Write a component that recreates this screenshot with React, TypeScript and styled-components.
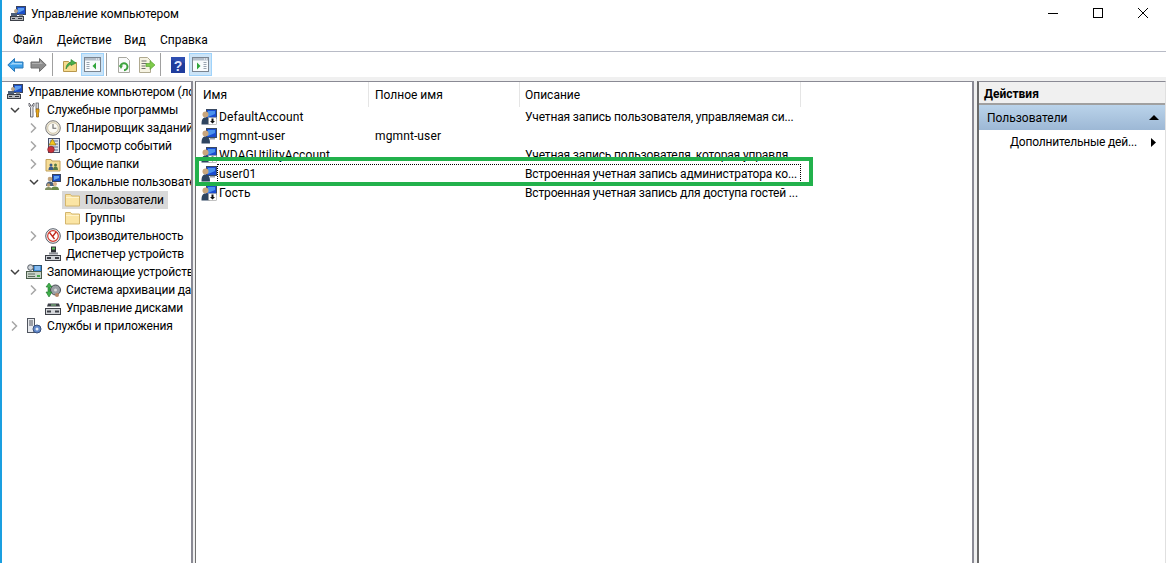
import React from "react";
import styled, { createGlobalStyle } from "styled-components";

const Global = createGlobalStyle`
  html, body { margin: 0; padding: 0; background: #fff; }
  #root { width: 1166px; height: 563px; overflow: hidden; }
`;

const Window = styled.div`
  position: relative;
  width: 1166px;
  height: 563px;
  overflow: hidden;
  display: flex;
  flex-direction: column;
  background: #fff;
  border-left: 2px solid #1a9fe0;
  box-sizing: border-box;
  font-family: "Roboto", "Noto Sans", sans-serif;
  font-size: 12px;
  color: #000;
`;

const TitleBar = styled.div`
  height: 28px;
  display: flex;
  align-items: center;
  padding-left: 8px;
  gap: 5px;
  flex: none;
`;
const TitleText = styled.span`
  font-size: 12px;
  flex: 1;
  padding-bottom: 1px;
  letter-spacing: -0.1px;
`;
const WindowControls = styled.div`
  display: flex;
  margin-right: 1px;
`;
const WindowButton = styled.div`
  width: 45px;
  height: 28px;
  display: flex;
  align-items: center;
  justify-content: center;
  margin-top: -3px;
`;
const MenuBar = styled.div`
  height: 23px;
  flex: none;
  display: flex;
  align-items: center;
  padding-left: 11px;
  padding-top: 1px;
  box-sizing: content-box;
  margin-top: -1px;
  border-bottom: 1px solid #b8bbc6;
`;
const MenuItem = styled.span<{ $w: number }>`
  width: ${(p) => p.$w}px;
  flex: none;
`;
const Toolbar = styled.div`
  height: 25px;
  flex: none;
  display: flex;
  align-items: center;
  padding-left: 2px;
`;
const ToolButton = styled.div<{ $on?: boolean }>`
  width: 23px;
  height: 23px;
  box-sizing: border-box;
  display: flex;
  align-items: center;
  justify-content: center;
  background: ${(p) => (p.$on ? "#cce4f7" : "transparent")};
  border: 1px solid ${(p) => (p.$on ? "#9fd3fb" : "transparent")};
`;
const ToolSep = styled.div`
  width: 1px;
  height: 23px;
  margin: 0 5px 0 2px;
  background: #a0a0a0;
`;
const Workspace = styled.div`
  flex: 1;
  min-height: 0;
  display: flex;
  background: #f0f0f0;
  padding-top: 4px;
`;
const TreePanel = styled.div`
  width: 191px;
  flex: none;
  box-sizing: border-box;
  background: #fff;
  border-top: 1px solid #8a8a94;
  border-right: 2px solid #8a8a94;
  overflow: hidden;
  padding-top: 1px;
  letter-spacing: -0.15px;
`;
const TreeRow = styled.div<{ $level: number }>`
  height: 18px;
  display: flex;
  align-items: center;
  white-space: nowrap;
  padding-left: ${(p) => (p.$level === 0 ? 5 : 5 + 19 * (p.$level - 1))}px;
`;
const Chevron = styled.span`
  width: 19px;
  height: 18px;
  flex: none;
  display: flex;
  align-items: center;
  padding-left: 3px;
  box-sizing: border-box;
`;
const TreeContent = styled.span<{ $sel?: boolean }>`
  display: inline-flex;
  align-items: center;
  height: 18px;
  gap: 5px;
  padding: 0 4px 0 2px;
  margin-left: -2px;
  background: ${(p) => (p.$sel ? "#d9d9d9" : "transparent")};
`;
const Gutter = styled.div<{ $w: number }>`
  width: ${(p) => p.$w}px;
  flex: none;
`;
const ListPanel = styled.div`
  width: 779px;
  flex: none;
  box-sizing: border-box;
  background: #fff;
  border-top: 1px solid #8a8a94;
  border-left: 1px solid #707070;
  border-right: 2px solid #8a8a94;
  overflow: hidden;
`;
const listColumns = "173px 151px 281px";
const ListHeader = styled.div`
  display: grid;
  grid-template-columns: ${listColumns};
  height: 25px;
`;
const HeaderCell = styled.div<{ $pad: number }>`
  display: flex;
  align-items: center;
  padding: 0 0 0 ${(p) => p.$pad}px;
  border-right: 1px solid #e5e5e5;
  box-sizing: border-box;
`;
const ListRow = styled.div`
  position: relative;
  display: grid;
  grid-template-columns: ${listColumns};
  height: 19px;
  align-items: center;
  white-space: nowrap;
`;
const NameCell = styled.div`
  display: flex;
  align-items: center;
  gap: 2px;
  padding-left: 5px;
`;
const NameText = styled.span`
  letter-spacing: 0.12px;
`;
const TextCell = styled.div<{ $pad: number }>`
  padding-left: ${(p) => p.$pad}px;
  overflow: hidden;
  letter-spacing: 0.12px;
`;
const DescCell = styled(TextCell)`
  letter-spacing: -0.15px;
`;
const FocusBox = styled.div`
  position: absolute;
  left: 21px;
  top: 0;
  width: 584px;
  height: 19px;
  box-sizing: border-box;
  border: 1px dotted #000;
`;
const ActionPanel = styled.div`
  flex: 1;
  box-sizing: border-box;
  background: #fff;
  border-top: 1px solid #8a8a94;
  border-left: 2px solid #6a6a6a;
  border-right: 1px solid #e0e0e0;
  display: flex;
  flex-direction: column;
`;
const ActionHead = styled.div`
  height: 19px;
  padding: 2px 0 0 5px;
  background: #f0f0f0;
  border-bottom: 2px solid #a0a0a0;
  display: flex;
  align-items: center;
  font-weight: 700;
`;
const ActionSection = styled.div`
  height: 25px;
  background: linear-gradient(#bad3ea, #9db8d5);
  display: flex;
  align-items: center;
  justify-content: space-between;
  padding: 0 6px 0 8px;
`;
const ActionItem = styled.div`
  height: 24px;
  display: flex;
  align-items: center;
  justify-content: space-between;
  padding: 0 9px 0 31px;
  letter-spacing: -0.2px;
`;
const Highlight = styled.div`
  position: absolute;
  left: 193px;
  top: 157px;
  width: 618px;
  height: 29px;
  box-sizing: border-box;
  border: 4px solid #22b14c;
`;

const Svg: React.FC<{ children: React.ReactNode; w?: number; h?: number; vb?: string }> = ({ children, w = 16, h = 16, vb }) => (
  <svg width={w} height={h} viewBox={vb ?? `0 0 ${w} ${h}`} style={{ flex: "none", display: "block" }}>
    {children}
  </svg>
);

const ComputerIcon = () => (
  <Svg>
    <rect x="6.5" y="0.5" width="9" height="8" fill="#1c50c8" stroke="#39445c" />
    <path d="M8 2h6v2l-6 3z" fill="#5c9cf0" />
    <rect x="9" y="8.5" width="4" height="2" fill="#8a8f98" />
    <path d="M4 5a2 2 0 1 1 0 .01z" fill="#b8a58a" />
    <rect x="1" y="7" width="6" height="3" fill="#4c5e78" />
    <rect x="0.5" y="10.5" width="13" height="4" fill="#b5b8bc" stroke="#3c4048" />
    <rect x="2" y="12" width="3" height="1" fill="#30343c" />
    <rect x="8" y="12" width="4" height="1" fill="#30343c" />
  </Svg>
);
const ToolsIcon = () => (
  <Svg>
    <path d="M3 1v3l1.5 1.5V15H7V5.500L8 4V1L6.500 2.500V4H4.500V2.500z" fill="#e8e8e8" stroke="#50525a" strokeWidth=".8" />
    <rect x="10" y="1" width="2.500" height="6" fill="#d8d8d8" stroke="#50525a" strokeWidth=".7" />
    <path d="M10 7h3v3l-.5 1v4h-2v-4l-.5-1z" fill="#e8a818" stroke="#8a5a08" strokeWidth=".7" />
  </Svg>
);
const ClockIcon = () => (
  <Svg>
    <circle cx="8" cy="8" r="7.300" fill="#ece6d6" stroke="#7c7c7c" />
    <circle cx="8" cy="8" r="5.300" fill="#fbfaf5" stroke="#c4b998" strokeWidth=".7" />
    <path d="M8 4v4.300h3.300" fill="none" stroke="#6a6a6a" strokeWidth="1.100" />
  </Svg>
);
const EventIcon = () => (
  <Svg>
    <rect x="3.500" y="0.500" width="11" height="14" fill="#dfe4ee" stroke="#46506a" />
    <path d="M5 3h8M5 6h8M5 9h8M5 12h8" stroke="#5c6a8c" strokeWidth="1" />
    <path d="M7.500 1l3.500 6H4z" fill="#f2c51f" stroke="#8a6a10" strokeWidth=".6" />
    <circle cx="6" cy="11.500" r="3.300" fill="#c8323c" stroke="#702028" strokeWidth=".6" />
  </Svg>
);
const SharedIcon = () => (
  <Svg>
    <path d="M1 3.500h5l1 1.500h8v10H1z" fill="#f6dd97" stroke="#c2a15a" />
    <circle cx="6" cy="9" r="1.500" fill="#3a5a8a" />
    <path d="M3.500 14c0-2.500 1-3.500 2.500-3.500s2.500 1 2.500 3.500z" fill="#3a5a8a" />
    <circle cx="10.500" cy="9" r="1.500" fill="#5a7a44" />
    <path d="M8 14c0-2.500 1-3.500 2.500-3.500s2.500 1 2.500 3.500z" fill="#5a7a44" />
  </Svg>
);
const UsersIcon = () => (
  <Svg>
    <rect x="7.500" y="0.500" width="8" height="7" fill="#1c50c8" stroke="#39445c" />
    <path d="M9 2h5v2l-5 2z" fill="#66a4f0" />
    <circle cx="5" cy="5" r="2.300" fill="#c2a37c" />
    <path d="M1 12c0-3 1.500-4.500 4-4.500s4 1.500 4 4.500z" fill="#47607e" />
    <circle cx="10" cy="10" r="2" fill="#d8b088" />
    <path d="M6 16c0-2.500 1.500-3.500 4-3.500s4 1 4 3.500z" fill="#6a8a4a" />
    <circle cx="3.500" cy="11" r="1.800" fill="#b89870" />
    <path d="M0 16c0-2.200 1.200-3 3.500-3S7 13.800 7 16z" fill="#7f8f60" />
  </Svg>
);
const FolderIcon = () => (
  <Svg>
    <path d="M1.500 2.500h5l1.200 1.500h7.800v10h-14z" fill="#fbe5a4" stroke="#d3b56c" />
    <path d="M2 5.500h13" stroke="#fff3cc" />
  </Svg>
);
const PerfIcon = () => (
  <Svg>
    <circle cx="8" cy="8" r="7.300" fill="#f4f4f4" stroke="#555c68" />
    <circle cx="8" cy="8" r="5.300" fill="#fff" stroke="#d23c30" strokeWidth="1.200" />
    <path d="M4.500 4.500L9.500 11M8 8l3-4" stroke="#c0281c" strokeWidth="1.300" fill="none" />
  </Svg>
);
const DeviceIcon = () => (
  <Svg>
    <rect x="6" y="0.500" width="5" height="6" fill="#2e3036" />
    <rect x="7" y="1.500" width="3" height="2" fill="#58bf5a" />
    <rect x="4" y="6.500" width="9" height="2" fill="#8c8f96" />
    <rect x="0.500" y="9.500" width="15" height="5" fill="#d2d4d8" stroke="#3c3f46" />
    <rect x="2" y="11" width="4" height="2" fill="#3c3f46" />
    <rect x="10" y="11" width="4" height="2" fill="#3c3f46" />
  </Svg>
);
const StorageIcon = () => (
  <Svg>
    <rect x="7.500" y="1.500" width="8" height="6" fill="#3f8fdc" stroke="#30506c" />
    <path d="M9 3h5M9 5h5" stroke="#cfe6ff" />
    <circle cx="4.500" cy="3.500" r="2.800" fill="#d0d4d8" stroke="#585e66" />
    <rect x="0.500" y="7.500" width="15" height="7" fill="#c9d3c9" stroke="#4a5c4a" />
    <path d="M2 10h7M2 12.500h7" stroke="#5c6c5c" />
    <rect x="11" y="11" width="3" height="2" fill="#45a648" />
  </Svg>
);
const BackupIcon = () => (
  <Svg>
    <circle cx="10.500" cy="8" r="5" fill="#9a9ea4" stroke="#4a4d54" />
    <circle cx="10.500" cy="8" r="1.500" fill="#dcdcdc" />
    <path d="M4 1l3 4H5v5h2l-3 5-3-5h2V5H1z" fill="#3fb04a" stroke="#1c7028" strokeWidth=".6" />
    <circle cx="12" cy="13" r="2" fill="#b88868" />
  </Svg>
);
const DiskIcon = () => (
  <Svg>
    <path d="M3 3.500h11l1 3H2z" fill="#3c3f46" />
    <rect x="6" y="4.500" width="5" height="1" fill="#8ad08a" />
    <rect x="0.500" y="8.500" width="15" height="6" fill="#d4d6da" stroke="#3c3f46" />
    <rect x="2" y="10.500" width="4" height="2" fill="#3c3f46" />
    <rect x="10" y="10.500" width="4" height="2" fill="#3c3f46" />
  </Svg>
);
const ServicesIcon = () => (
  <Svg>
    <rect x="1.500" y="0.500" width="7" height="14" fill="#e8eaee" stroke="#50555e" />
    <path d="M3 3h4M3 5h4M3 7h4" stroke="#50555e" />
    <circle cx="11" cy="11" r="4" fill="#5f86c8" stroke="#38507c" />
    <circle cx="11" cy="11" r="1.500" fill="#e6eefa" />
  </Svg>
);
const UserIcon: React.FC<{ down?: boolean }> = ({ down }) => (
  <Svg>
    <rect x="5.500" y="0.500" width="10" height="9" fill="#1a4cd0" stroke="#3a4a62" />
    <path d="M7 2h7v3l-7 3z" fill="#4a92ee" />
    <rect x="9" y="10" width="5" height="1.500" fill="#9aa0a8" />
    <circle cx="4.500" cy="5.500" r="3" fill="#c9a67c" />
    <path d="M.5 15.500c0-5.500 1.500-7 4-7s4.500 1.500 4.500 7z" fill="#2f4560" />
    {down && (
      <>
        <rect x="7.500" y="8.500" width="8" height="7" fill="#fff" stroke="#9a9a9a" strokeWidth=".6" />
        <path d="M10.500 9.500h2v2.500h1.500l-2.500 2.500L9 12h1.500z" fill="#111" />
      </>
    )}
  </Svg>
);
const ChevronOpen = () => (
  <Svg w={10} h={10}>
    <path d="M1 3l4 4 4-4" fill="none" stroke="#404040" strokeWidth="1.500" />
  </Svg>
);
const ChevronClosed = () => (
  <Svg w={10} h={10}>
    <path d="M2 0.500l4.500 4.500L2 9.500" fill="none" stroke="#a6a6a6" strokeWidth="1.500" />
  </Svg>
);
const BackIcon = () => (
  <Svg w={17} h={16}>
    <path d="M.8 8L7.500 1.500V5h8.500v6H7.500v3.500z" fill="#3da0ea" stroke="#2a78b8" />
    <path d="M3 8l3.500-3.500V6h8.500v1.500H6z" fill="#a5d8fa" />
  </Svg>
);
const ForwardIcon = () => (
  <Svg w={17} h={16}>
    <path d="M16.200 8L9.500 1.500V5H1v6h8.500v3.500z" fill="#8d8d8d" stroke="#6f6f6f" />
    <path d="M2 6h8V4l3 3H2z" fill="#b0b0b0" />
  </Svg>
);
const UpFolderIcon = () => (
  <Svg>
    <path d="M1.500 4.500h5l1 1h7v9h-13z" fill="#f7dc8f" stroke="#b8974c" />
    <path d="M4 12c0-4 2-6 5-7V2.500L14 6l-5 2.500V7C7 8 5.500 9.500 4 12z" fill="#48b04c" stroke="#2a7c30" strokeWidth=".6" />
  </Svg>
);
const PaneIcon: React.FC<{ right?: boolean }> = ({ right }) => (
  <Svg w={17} h={15}>
    <rect x="0.500" y="0.500" width="16" height="14" fill="#f8fbfd" stroke="#7a8490" />
    <rect x="1" y="1" width="15" height="2.500" fill="#b4bec9" />
    <path d="M12 2h1M14 2h1" stroke="#fff" />
    {right ? (
      <>
        <path d="M11.500 5.500h3M11.500 7.500h3M11.500 9.500h3M11.500 11.500h3" stroke="#9aa4b0" />
        <path d="M5 5.500l3.500 3.500L5 12.500z" fill="#2fa53a" />
      </>
    ) : (
      <>
        <path d="M2.500 5.500h3M2.500 7.500h3M2.500 9.500h3M2.500 11.500h3" stroke="#9aa4b0" />
        <path d="M12 5.500L8.500 9l3.500 3.500z" fill="#2fa53a" />
      </>
    )}
  </Svg>
);
const RefreshIcon = () => (
  <Svg>
    <path d="M2.500 .5h8l3 3v12h-11z" fill="#fafafa" stroke="#a8a8a0" />
    <path d="M4.500 10a3.500 3.500 0 1 1 3.500 3.200" fill="none" stroke="#3ea23e" strokeWidth="2" />
    <path d="M3 8.500h4L5 12z" fill="#3ea23e" />
  </Svg>
);
const ExportIcon = () => (
  <Svg w={18} h={16}>
    <path d="M1.500 .5h8l3 3v12h-11z" fill="#f6f3e2" stroke="#b0aa90" />
    <path d="M3.500 4h5M3.500 6.500h5M3.500 9h4M3.500 11.500h4" stroke="#707070" />
    <path d="M8 6.500h4V3.500l5 4.500-5 4.500V9.500H8z" fill="#7fcb4b" stroke="#4f9a2c" strokeWidth=".6" />
  </Svg>
);
const HelpIcon = () => (
  <Svg>
    <rect x="1" y="0" width="14" height="16" fill="#1f3c9c" />
    <path d="M1 0h14v6L1 3z" fill="#3b5cc0" opacity=".6" />
    <text x="8" y="13.500" textAnchor="middle" fontFamily="Liberation Sans, sans-serif" fontWeight="700" fontSize="14" fill="#dfe6ff">?</text>
  </Svg>
);

type TreeItem = { level: number; label: string; icon: React.ReactNode; chevron?: "open" | "closed"; selected?: boolean };
const treeItems: TreeItem[] = [
  { level: 0, label: "Управление компьютером (локальным)", icon: <ComputerIcon /> },
  { level: 1, label: "Служебные программы", icon: <ToolsIcon />, chevron: "open" },
  { level: 2, label: "Планировщик заданий", icon: <ClockIcon />, chevron: "closed" },
  { level: 2, label: "Просмотр событий", icon: <EventIcon />, chevron: "closed" },
  { level: 2, label: "Общие папки", icon: <SharedIcon />, chevron: "closed" },
  { level: 2, label: "Локальные пользователи и группы", icon: <UsersIcon />, chevron: "open" },
  { level: 3, label: "Пользователи", icon: <FolderIcon />, selected: true },
  { level: 3, label: "Группы", icon: <FolderIcon /> },
  { level: 2, label: "Производительность", icon: <PerfIcon />, chevron: "closed" },
  { level: 2, label: "Диспетчер устройств", icon: <DeviceIcon /> },
  { level: 1, label: "Запоминающие устройства", icon: <StorageIcon />, chevron: "open" },
  { level: 2, label: "Система архивации данных", icon: <BackupIcon />, chevron: "closed" },
  { level: 2, label: "Управление дисками", icon: <DiskIcon /> },
  { level: 1, label: "Службы и приложения", icon: <ServicesIcon />, chevron: "closed" },
];

const users = [
  { name: "DefaultAccount", full: "", desc: "Учетная запись пользователя, управляемая си...", down: true },
  { name: "mgmnt-user", full: "mgmnt-user", desc: "" },
  { name: "WDAGUtilityAccount", full: "", desc: "Учетная запись пользователя, которая управля...", down: true },
  { name: "user01", full: "", desc: "Встроенная учетная запись администратора ко...", focus: true },
  { name: "Гость", full: "", desc: "Встроенная учетная запись для доступа гостей ...", down: true },
];

export default function App() {
  return (
    <Window>
      <Global />
      <TitleBar>
        <ComputerIcon />
        <TitleText>Управление компьютером</TitleText>
        <WindowControls>
          <WindowButton>
            <Svg w={10} h={10}><path d="M0 5.500h10" stroke="#000" /></Svg>
          </WindowButton>
          <WindowButton>
            <Svg w={10} h={10}><rect x=".5" y=".5" width="9" height="9" fill="none" stroke="#000" /></Svg>
          </WindowButton>
          <WindowButton>
            <Svg w={10} h={10}><path d="M0 0l10 10M10 0L0 10" stroke="#000" /></Svg>
          </WindowButton>
        </WindowControls>
      </TitleBar>
      <MenuBar>
        <MenuItem $w={44}>Файл</MenuItem>
        <MenuItem $w={67}>Действие</MenuItem>
        <MenuItem $w={36}>Вид</MenuItem>
        <MenuItem $w={60}>Справка</MenuItem>
      </MenuBar>
      <Toolbar>
        <ToolButton><BackIcon /></ToolButton>
        <ToolButton><ForwardIcon /></ToolButton>
        <ToolSep />
        <ToolButton><UpFolderIcon /></ToolButton>
        <ToolButton $on><PaneIcon /></ToolButton>
        <ToolSep />
        <ToolButton><RefreshIcon /></ToolButton>
        <ToolButton><ExportIcon /></ToolButton>
        <ToolSep />
        <ToolButton><HelpIcon /></ToolButton>
        <ToolButton $on><PaneIcon right /></ToolButton>
      </Toolbar>
      <Workspace>
        <TreePanel>
          {treeItems.map((t) => (
            <TreeRow key={t.label} $level={t.level}>
              {t.level > 0 && (
                <Chevron>
                  {t.chevron === "open" && <ChevronOpen />}
                  {t.chevron === "closed" && <ChevronClosed />}
                </Chevron>
              )}
              <TreeContent $sel={t.selected}>
                {t.icon}
                <span>{t.label}</span>
              </TreeContent>
            </TreeRow>
          ))}
        </TreePanel>
        <Gutter $w={2} />
        <ListPanel>
          <ListHeader>
            <HeaderCell $pad={7}>Имя</HeaderCell>
            <HeaderCell $pad={6}>Полное имя</HeaderCell>
            <HeaderCell $pad={5}>Описание</HeaderCell>
          </ListHeader>
          {users.map((u) => (
            <ListRow key={u.name}>
              <NameCell>
                <UserIcon down={u.down} />
                <NameText>{u.name}</NameText>
              </NameCell>
              <TextCell $pad={6}>{u.full}</TextCell>
              <DescCell $pad={5}>{u.desc}</DescCell>
              {u.focus && <FocusBox />}
            </ListRow>
          ))}
        </ListPanel>
        <Gutter $w={3} />
        <ActionPanel>
          <ActionHead>Действия</ActionHead>
          <ActionSection>
            <span>Пользователи</span>
            <Svg w={10} h={5}><path d="M0 5L5 0l5 5z" fill="#000" /></Svg>
          </ActionSection>
          <ActionItem>
            <span>Дополнительные дей...</span>
            <Svg w={5} h={9}><path d="M0 0l5 4.500L0 9z" fill="#000" /></Svg>
          </ActionItem>
        </ActionPanel>
      </Workspace>
      <Highlight />
    </Window>
  );
}
